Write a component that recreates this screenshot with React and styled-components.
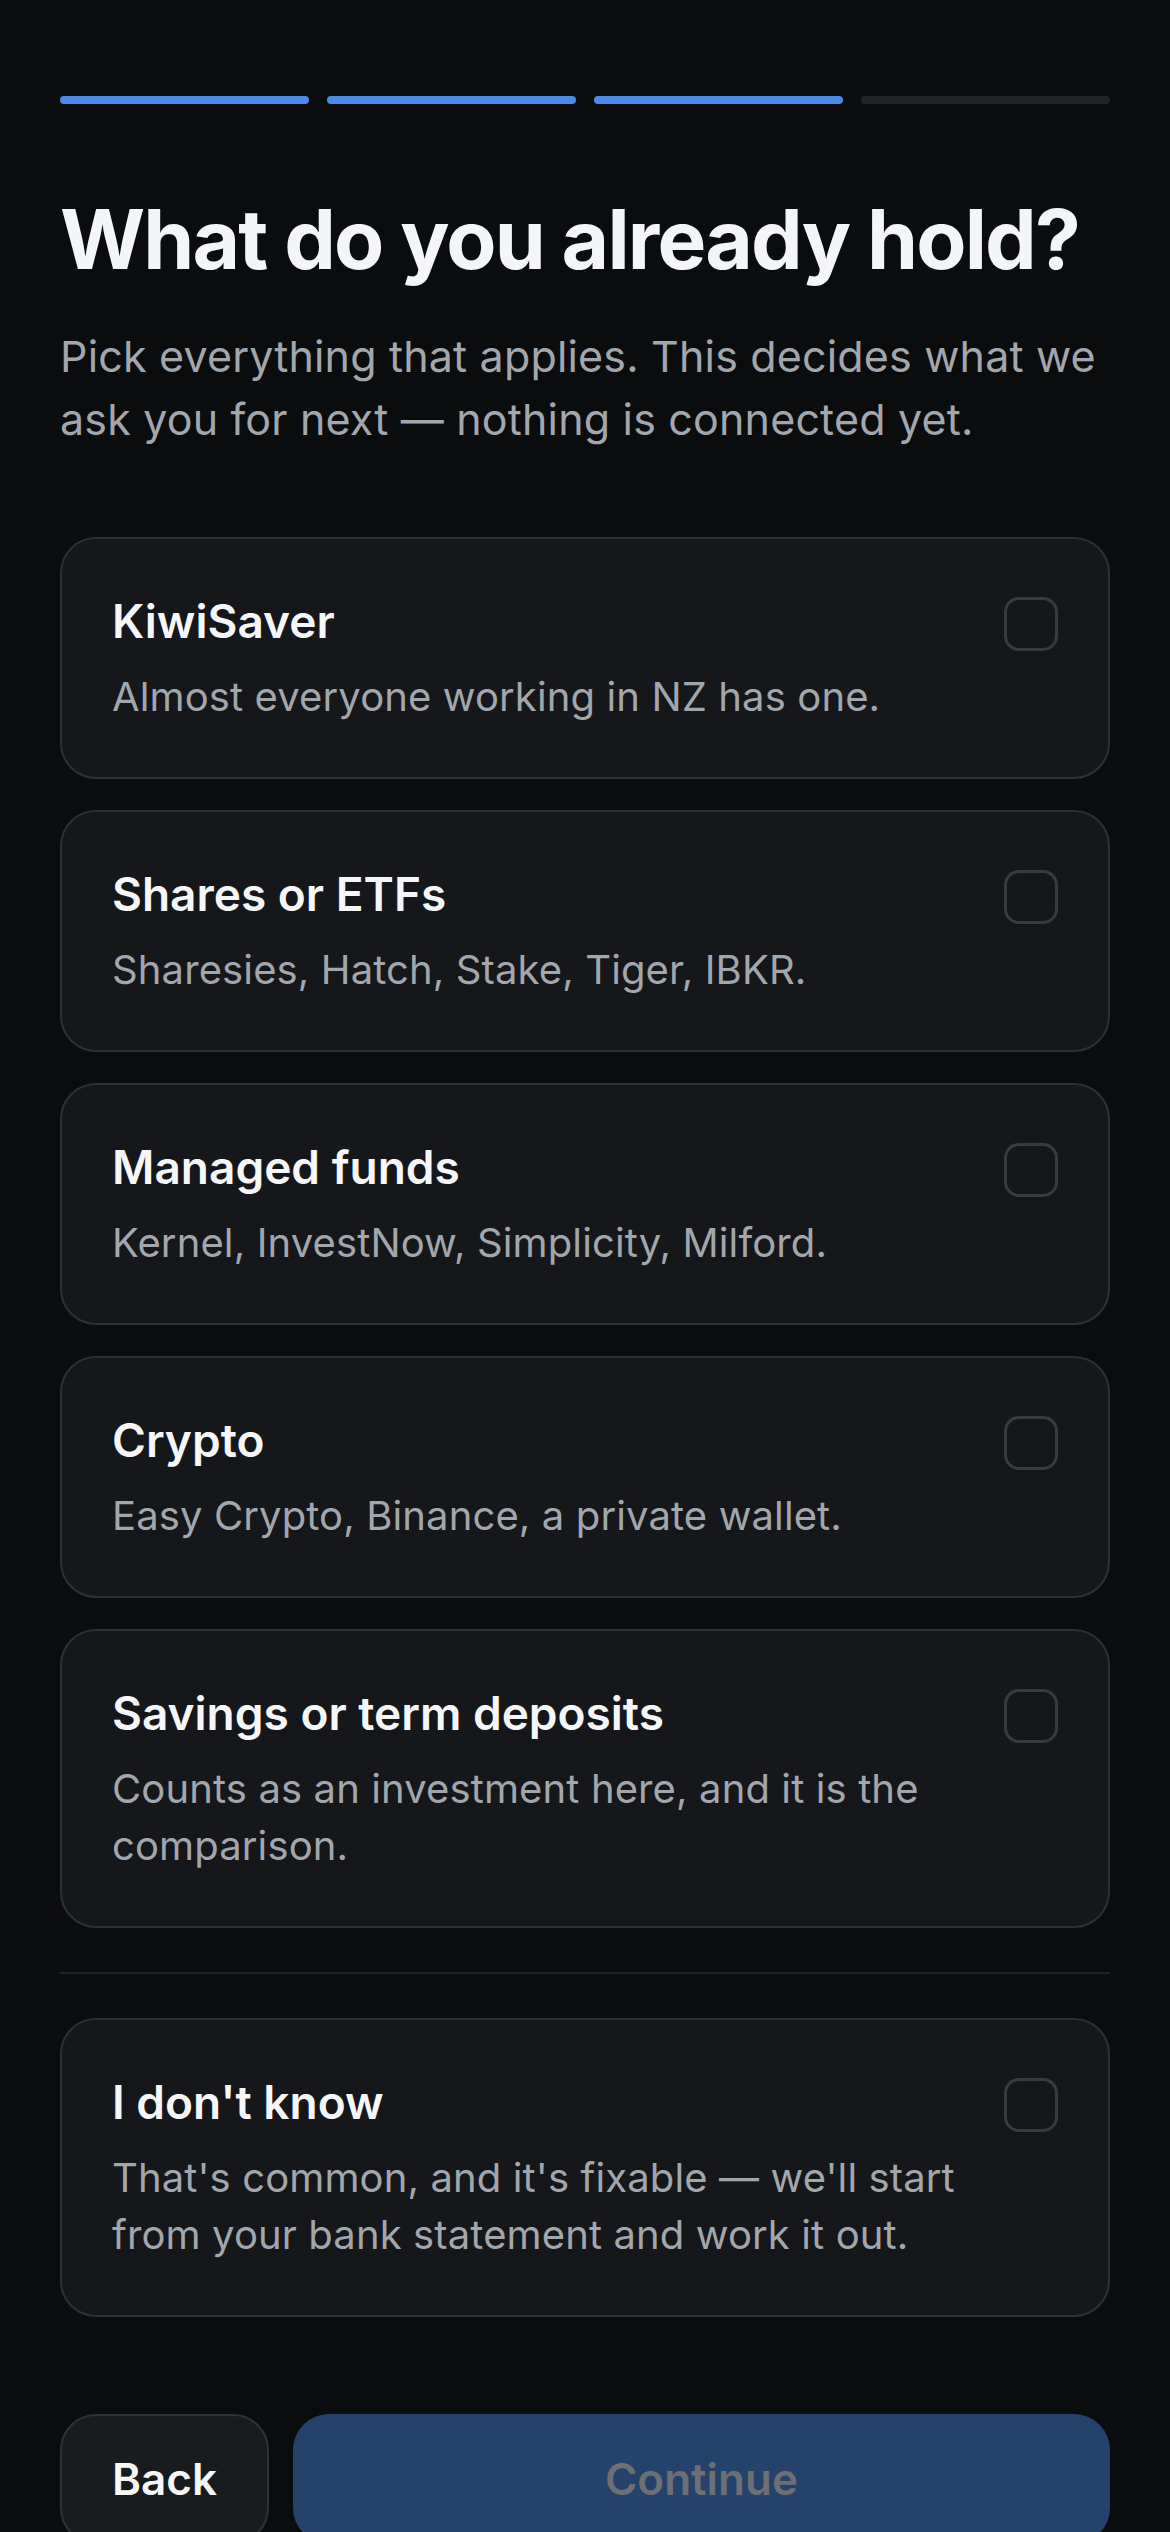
import React from "react";
import styled, { createGlobalStyle } from "styled-components";

const Global = createGlobalStyle`
  html, body { margin: 0; padding: 0; background: #0b0c0e; }
  body { font-family: Inter, "Noto Sans", sans-serif; -webkit-font-smoothing: antialiased; }
  * { box-sizing: border-box; }
`;

const Page = styled.div`
  min-height: 2532px;
  background: #0b0c0e;
  padding: 96px 60px 0;
  display: flex;
  flex-direction: column;
`;

const Progress = styled.div`
  display: flex;
  gap: 18px;
`;

const Step = styled.div`
  flex: 1;
  height: 8px;
  border-radius: 4px;
  background: ${(p) => (p.$done ? "#4a8bea" : "#222428")};
`;

const Heading = styled.h1`
  margin: 91px 0 0;
  font-size: 82px;
  line-height: 90px;
  font-weight: 700;
  letter-spacing: -0.022em;
  color: #f4f5f7;
`;

const Subtitle = styled.p`
  margin: 40px 0 0;
  font-size: 43px;
  line-height: 63px;
  letter-spacing: 0.004em;
  color: #a2a6ad;
`;

const List = styled.div`
  margin-top: 86px;
  display: flex;
  flex-direction: column;
  gap: 31px;
`;

const Card = styled.label`
  display: flex;
  align-items: flex-start;
  gap: 24px;
  background: #15171a;
  border: 2px solid #2d3035;
  border-radius: 36px;
  padding: 53px 50px 52px 50px;
  cursor: pointer;
`;

const Text = styled.div`
  flex: 1;
  display: flex;
  flex-direction: column;
  gap: 18px;
`;

const Title = styled.div`
  font-size: 46px;
  line-height: 58px;
  font-weight: 600;
  color: #f5f6f8;
`;

const Desc = styled.div`
  font-size: 40px;
  line-height: 57px;
  letter-spacing: 0.003em;
  color: #a2a6ad;
`;

const Box = styled.span`
  flex: none;
  width: 54px;
  height: 54px;
  margin-top: 5px;
  border: 3px solid #383b41;
  border-radius: 15px;
`;

const Divider = styled.hr`
  margin: 44px 0;
  border: none;
  height: 2px;
  background: #202226;
`;

const Footer = styled.div`
  margin-top: 97px;
  display: flex;
  gap: 24px;
`;

const Button = styled.button`
  height: 130px;
  border-radius: 36px;
  font-family: Inter, "Noto Sans", sans-serif;
  font-size: 44px;
  font-weight: 600;
  padding: 0 50px;
  flex: ${(p) => (p.$primary ? 1 : "none")};
  background: ${(p) => (p.$primary ? "#25426a" : "#191c1f")};
  color: ${(p) => (p.$primary ? "#6c6f74" : "#f5f6f8")};
  border: ${(p) => (p.$primary ? "none" : "2px solid #2e3236")};
`;

const options = [
  { t: "KiwiSaver", d: "Almost everyone working in NZ has one." },
  { t: "Shares or ETFs", d: "Sharesies, Hatch, Stake, Tiger, IBKR." },
  { t: "Managed funds", d: "Kernel, InvestNow, Simplicity, Milford." },
  { t: "Crypto", d: "Easy Crypto, Binance, a private wallet." },
  { t: "Savings or term deposits", d: "Counts as an investment here, and it is the comparison." },
];

function Option({ t, d }) {
  return (
    <Card>
      <Text>
        <Title>{t}</Title>
        <Desc>{d}</Desc>
      </Text>
      <Box />
    </Card>
  );
}

export default function App() {
  return (
    <>
      <Global />
      <Page>
        <Progress>
          <Step $done />
          <Step $done />
          <Step $done />
          <Step />
        </Progress>
        <Heading>What do you already hold?</Heading>
        <Subtitle>
          Pick everything that applies. This decides what we ask you for next — nothing is connected yet.
        </Subtitle>
        <List>
          {options.map((o) => (
            <Option key={o.t} {...o} />
          ))}
        </List>
        <Divider />
        <Option t="I don't know" d="That's common, and it's fixable — we'll start from your bank statement and work it out." />
        <Footer>
          <Button>Back</Button>
          <Button $primary disabled>Continue</Button>
        </Footer>
      </Page>
    </>
  );
}
